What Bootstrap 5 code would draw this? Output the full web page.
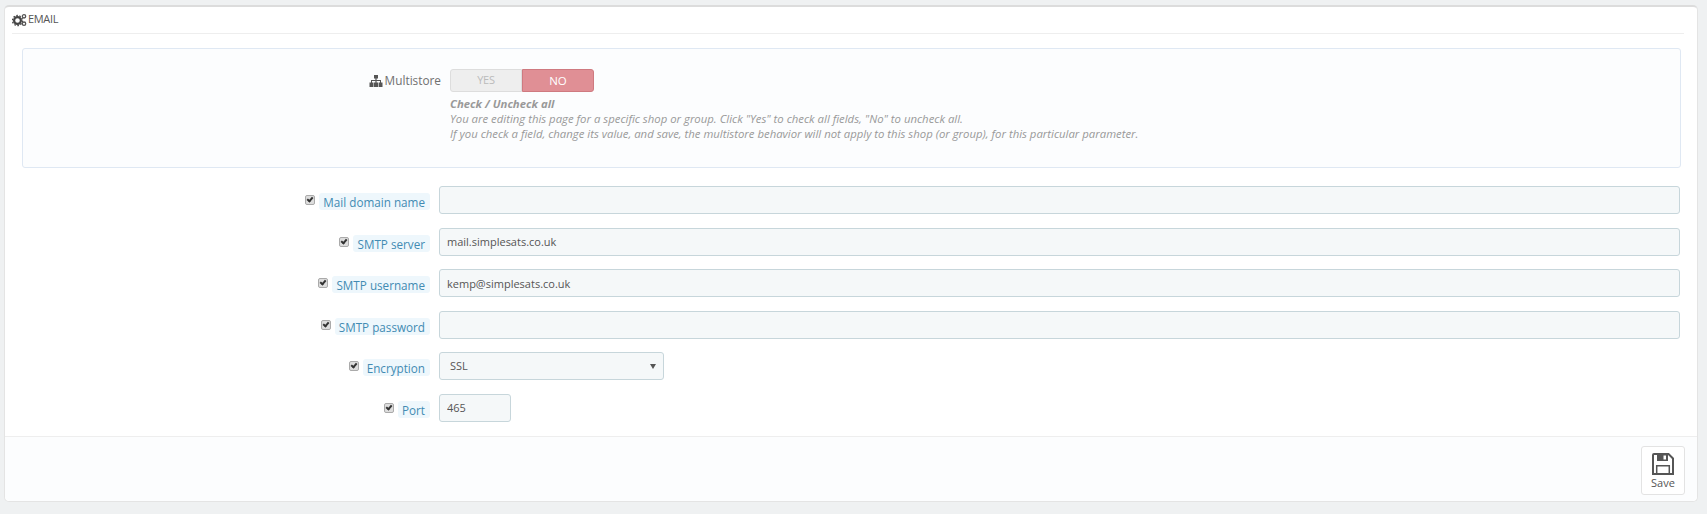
<!DOCTYPE html>
<html lang="en"><head><meta charset="utf-8"><title>Email</title>
<link href="https://cdn.jsdelivr.net/npm/bootstrap@5.3.0/dist/css/bootstrap.min.css" rel="stylesheet">
<style>
html,body{height:514px;overflow:hidden}
body{background:#eff1f2;font-family:"Open Sans",sans-serif;font-size:12px;color:#555;padding:5px 9px 0 4px}
.ps-panel{height:497px;background:#fff;border:1px solid #e4e4e4;border-top:2px solid #dcdcdc;border-radius:5px;display:flex;flex-direction:column}
.ps-head{height:27px;margin:0 13px 0 7px;border-bottom:1px solid #eee;display:flex;align-items:center;gap:1px;color:#555;padding-bottom:1px}
.ps-title{font-size:11px;letter-spacing:-.35px}
.ps-well{margin:14px 16px 0 17px;height:120px;background:#fcfdfe;border:1px solid #dfe8f3;border-radius:3px;display:flex;padding-top:20px}
.ps-mlabel{width:427px;padding-right:9px;display:flex;justify-content:flex-end;align-items:center;gap:2px;height:23px;font-size:11.8px;color:#707070;flex:none}
.ps-mtext{margin-top:1px}
.ps-switch{display:flex;width:144px;height:23px;font-size:11px}
.ps-yes,.ps-no{width:50%;display:flex;align-items:center;justify-content:center}
.ps-yes{background:#eee;border:1px solid #ddd;border-radius:3px 0 0 3px;color:#bbb;letter-spacing:-.2px}
.ps-no{background:#e08f95;border:1px solid #cf7a80;border-radius:0 3px 3px 0;color:#fff;font-weight:500;font-size:11.5px}
.ps-help{margin-top:4px;color:#999;font-style:italic;font-size:11.35px;line-height:15px}
.ps-form{padding-top:18px;flex:1}
.ps-row{display:flex;height:28px;margin-bottom:13.5px}
.ps-lab{width:434px;flex:none;padding-right:9px;display:flex;justify-content:flex-end;align-items:center;gap:4px}
.ps-tag{background:#eef7fc;color:#428bb3;font-size:11.7px;padding:0 5px 0 4px;height:17px;line-height:18px;border-radius:3px;margin-top:3px}
.ps-check{appearance:none;width:10px;height:10px;background:#ddd;border:1px solid #aaa;border-radius:2px;position:relative;margin:0;flex:none}
.ps-check::after{content:"";position:absolute;left:2px;top:0;width:4px;height:6px;border:solid #333;border-width:0 2px 2px 0;transform:rotate(40deg)}
.ps-in{height:28px;background:#f5f8f9;border:1px solid #c7d6db;border-radius:3px;font-family:inherit;font-size:11px;color:#555;padding:0 7px;outline:0}
.ps-fill{width:1241px}
.ps-sel{width:225px;display:flex;align-items:center;justify-content:space-between;padding:0 7px 0 10px}
.ps-port{width:72px}
.ps-arrow{width:0;height:0;border:3px solid transparent;border-top:5px solid #555;border-bottom:0}
.ps-foot{height:65px;background:#fcfdfe;border-top:1px solid #eee;display:flex;justify-content:flex-end;align-items:flex-start;padding:9px 12px 0 0;border-radius:0 0 5px 5px}
.ps-save{width:44px;height:49px;background:#fff;border:1px solid #e3e3e3;border-radius:3px;display:flex;flex-direction:column;align-items:center;font-size:11px;color:#555;line-height:14px;padding:6px 0 0;gap:1px}
</style></head>
<body>
<div class="ps-panel">
 <div class="ps-head">
  <svg width="15" height="14" viewBox="0 0 15 14"><circle cx="5.5" cy="7.500" r="3.400" fill="none" stroke="#444" stroke-width="2.200"/><circle cx="5.500" cy="7.500" r="5" fill="none" stroke="#444" stroke-width="1.300" stroke-dasharray="1.600 1.500"/><circle cx="12" cy="3.300" r="1.700" fill="none" stroke="#555" stroke-width="1.300"/><circle cx="12" cy="10.700" r="1.700" fill="none" stroke="#555" stroke-width="1.300"/></svg>
  <span class="ps-title">EMAIL</span>
 </div>
 <div class="ps-well">
  <div class="ps-mlabel">
   <svg width="14" height="12" viewBox="0 0 14 12"><path fill="#555" d="M5 0h4v3.500H7.600V5h4.400v2.600h1.500V12H9.600V7.600H11V6H7.600v1.600H9V12H5V7.600h1.400V6H3v1.600h1.500V12H.5V7.600H2V5h4.400V3.500H5z"/></svg>
   <span class="ps-mtext">Multistore</span>
  </div>
  <div>
   <div class="ps-switch"><span class="ps-yes">YES</span><span class="ps-no">NO</span></div>
   <div class="ps-help"><strong>Check / Uncheck all</strong><br>You are editing this page for a specific shop or group. Click "Yes" to check all fields, "No" to uncheck all.<br>If you check a field, change its value, and save, the multistore behavior will not apply to this shop (or group), for this particular parameter.</div>
  </div>
 </div>
 <div class="ps-form">
  <div class="ps-row"><div class="ps-lab"><input class="ps-check" type="checkbox" checked><span class="ps-tag">Mail domain name</span></div><input class="ps-in ps-fill" type="text"></div>
  <div class="ps-row"><div class="ps-lab"><input class="ps-check" type="checkbox" checked><span class="ps-tag">SMTP server</span></div><input class="ps-in ps-fill" type="text" value="mail.simplesats.co.uk"></div>
  <div class="ps-row"><div class="ps-lab"><input class="ps-check" type="checkbox" checked><span class="ps-tag">SMTP username</span></div><input class="ps-in ps-fill" type="text" value="kemp@simplesats.co.uk"></div>
  <div class="ps-row"><div class="ps-lab"><input class="ps-check" type="checkbox" checked><span class="ps-tag">SMTP password</span></div><input class="ps-in ps-fill" type="text"></div>
  <div class="ps-row"><div class="ps-lab"><input class="ps-check" type="checkbox" checked><span class="ps-tag">Encryption</span></div><div class="ps-in ps-sel"><span>SSL</span><span class="ps-arrow"></span></div></div>
  <div class="ps-row"><div class="ps-lab"><input class="ps-check" type="checkbox" checked><span class="ps-tag">Port</span></div><input class="ps-in ps-port" type="text" value="465"></div>
 </div>
 <div class="ps-foot">
  <button class="ps-save" type="button">
   <svg width="22" height="22" viewBox="0 0 22 22"><path fill="none" stroke="#555" stroke-width="2" d="M2 1h14.500L21 5.500V21H1V2a1 1 0 0 1 1-1z"/><path fill="#555" fill-rule="evenodd" d="M5 1h11v7H5zM11.500 2.500V6.500H14V2.500z"/><path fill="none" stroke="#555" stroke-width="1.500" d="M4.700 20.500V12.700H17.300V20.500"/></svg>
   <span>Save</span>
  </button>
 </div>
</div>
</body></html>
